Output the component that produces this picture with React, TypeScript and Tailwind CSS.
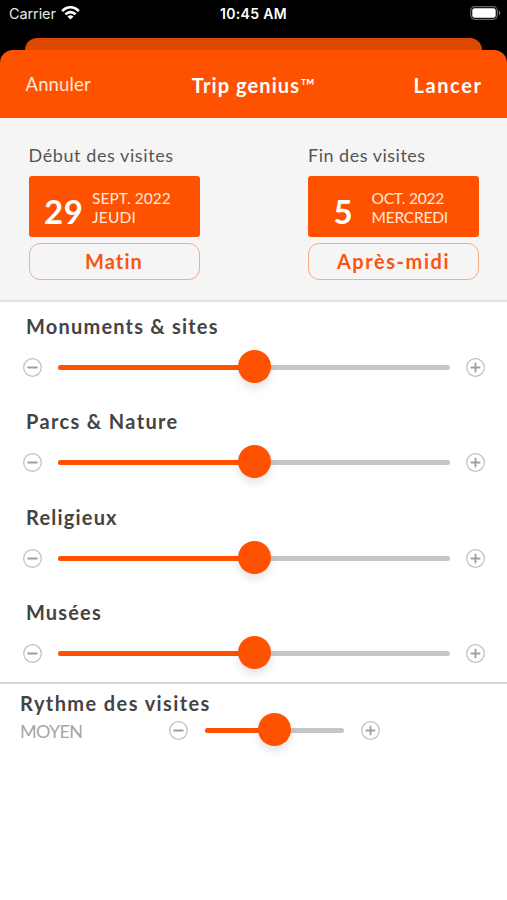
const BOLD = "font-bold text-[#444444] whitespace-nowrap";

function RoundButton({ plus = false }: { plus?: boolean }) {
  return (
    <svg className="size-[19px] shrink-0" viewBox="0 0 19 19" fill="none">
      <circle cx="9.5" cy="9.5" r="8.8" stroke="#bfbfbf" strokeWidth="1.2" />
      <path d={plus ? "M5.4 9.5h8.2M9.5 5.4v8.2" : "M5.2 9.5h8.6"} stroke="#a0a0a0" strokeWidth="1.9" strokeLinecap="round" />
    </svg>
  );
}

function Slider({ track }: { track: string }) {
  return (
    <div className="flex h-[19px] items-center">
      <RoundButton />
      <div className={"relative mx-[16.5px] flex h-[5px] rounded-full bg-[#c6c6c6] " + track}>
        <div className="h-full w-1/2 rounded-full bg-[#ff5200]" />
        <div className="absolute left-1/2 top-1/2 -ml-[16px] -mt-[17.5px] size-[33px] rounded-full bg-[#ff5200] shadow-[0_5px_10px_rgba(0,0,0,0.11)]" />
      </div>
      <RoundButton plus />
    </div>
  );
}

function Row({ title, spacing }: { title: string; spacing: string }) {
  return (
    <div className="h-[95.3px] pt-[11px]">
      <div className={`h-6 pl-[26px] text-[20px] leading-6 ${BOLD} ${spacing}`}>{title}</div>
      <div className="mt-5 pl-[22.5px]">
        <Slider track="w-[391.5px]" />
      </div>
    </div>
  );
}

interface DayProps {
  label: string;
  labelSpacing: string;
  day: string;
  month: string;
  monthSpacing: string;
  weekday: string;
  weekdaySpacing: string;
  moment: string;
  momentSpacing: string;
}

function DayCard(p: DayProps) {
  return (
    <div className="w-[171px]">
      <div className={`-mt-px h-[25px] whitespace-nowrap text-[18px] leading-6 text-[#555555] ${p.labelSpacing}`}>{p.label}</div>
      <div className="mt-[7.5px] flex h-[61.5px] rounded-[3px] bg-[#ff5200] text-white">
        <div className="w-[63.5px] pl-[7px] pt-[14px] text-center text-[33px] font-bold leading-[42px] tracking-[0.6px]">{p.day}</div>
        <div className="whitespace-nowrap pt-[13.5px] text-[15.5px] leading-[19.3px] text-[#ffe9dc]">
          <div className={p.monthSpacing}>{p.month}</div>
          <div className={p.weekdaySpacing}>{p.weekday}</div>
        </div>
      </div>
      <div className={`mt-[5.5px] flex h-[37px] items-center justify-center rounded-[11px] border border-[#f9aa87] text-[20px] font-bold text-[#f95510] ${p.momentSpacing}`}>
        {p.moment}
      </div>
    </div>
  );
}

export default function App() {
  return (
    <div className="h-[900px] w-[507px] overflow-hidden bg-white font-['Lato','Noto_Sans',sans-serif]">
      <div className="bg-black">
        <div className="grid h-[38px] grid-cols-3 px-[9px] pb-[10px] font-['Inter',sans-serif] text-[14px] text-white">
          <div className="flex items-center gap-[5px] text-[#e8e8e8]">
            <span className="text-[14.5px] tracking-[-0.1px]">Carrier</span>
            <svg className="-mt-[3px] h-[14px] w-[19px]" viewBox="0 0 19 14" fill="none" stroke="#fff" strokeWidth="2.6">
              <path d="M1.2 5.2C6-.1 13-.1 17.8 5.2M4.4 8.4c3-3.1 7.2-3.1 10.2 0" />
              <path d="M9.5 13.6 6.5 10.6c1.7-1.7 4.3-1.7 6 0Z" fill="#fff" stroke="none" />
            </svg>
          </div>
          <div className="flex items-center justify-center whitespace-nowrap pt-px font-semibold tracking-[0.35px] -mt-[2px]">10:45 AM</div>
          <div className="flex items-center justify-end">
            <svg className="-mr-[3px] -mt-[2px] h-[14px] w-[31px]" viewBox="0 0 31 14">
              <rect x=".7" y=".7" width="26.6" height="12.6" rx="4" fill="none" stroke="#666" strokeWidth="1.2" />
              <rect x="2.3" y="2.3" width="23.4" height="9.4" rx="2.3" fill="#fff" />
              <path d="M28.8 4.8c2 .7 2 3.7 0 4.4Z" fill="#777" />
            </svg>
          </div>
        </div>
        <div className="ml-[25px] h-3 w-[457px] rounded-t-[12px] bg-[#dc4800]" />
        <div className="grid h-[68px] grid-cols-3 items-center rounded-t-[13px] bg-[#ff5200] px-[25.5px] pt-px text-[20px] text-white">
          <div className="pt-px text-[18.5px] tracking-[0.15px] text-[#ffe6d8]">Annuler</div>
          <div className="whitespace-nowrap text-center font-bold tracking-[1.1px]">
            Trip genius<span className="font-normal tracking-normal">™</span>
          </div>
          <div className="-mr-px text-right font-bold tracking-[1.6px]">Lancer</div>
        </div>
      </div>

      <div className="flex h-[184px] justify-between border-b-2 border-[#e2e2e2] bg-[#f5f5f5] pl-[28.5px] pr-[28px] pt-[26px]">
        <DayCard label="Début des visites" labelSpacing="tracking-[0.58px]" day="29" month="SEPT. 2022" monthSpacing="tracking-[0.05px]" weekday="JEUDI" weekdaySpacing="tracking-[0.2px]" moment="Matin" momentSpacing="tracking-[1.1px]" />
        <DayCard label="Fin des visites" labelSpacing="tracking-[0.5px]" day="5" month="OCT. 2022" monthSpacing="tracking-[-0.2px]" weekday="MERCREDI" weekdaySpacing="tracking-[-0.2px]" moment="Après-midi" momentSpacing="tracking-[1.55px]" />
      </div>

      <div className="h-[380px] pt-px">
        <Row title="Monuments & sites" spacing="tracking-[1.2px]" />
        <Row title="Parcs & Nature" spacing="tracking-[1.35px]" />
        <Row title="Religieux" spacing="tracking-[1.2px]" />
        <Row title="Musées" spacing="tracking-[1.15px]" />
      </div>

      <div className="border-t-2 border-[#d6d6d6] pl-5 pt-[7px]">
        <div className={`h-6 text-[20px] leading-6 tracking-[1.4px] ${BOLD}`}>Rythme des visites</div>
        <div className="mt-[6px] flex h-[19px] items-center">
          <div className="w-[149px] text-[18px] leading-none tracking-[-0.7px] text-[#a6a6a6]">MOYEN</div>
          <Slider track="w-[139.5px]" />
        </div>
      </div>
    </div>
  );
}
